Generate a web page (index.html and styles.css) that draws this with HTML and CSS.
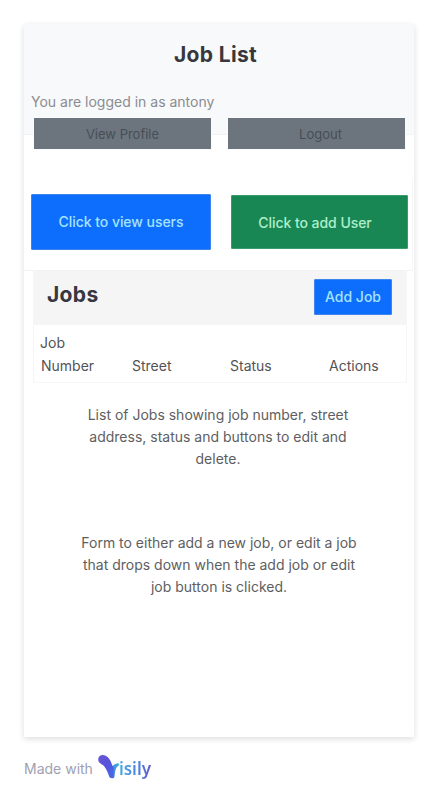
FILE: index.html
```html
<!DOCTYPE html>
<html lang="en">
<head>
<meta charset="utf-8">
<title>Job List</title>
<link rel="stylesheet" href="styles.css">
</head>
<body>
<main class="card">
  <header class="top">
    <h1 class="title">Job List</h1>
    <p class="login">You are logged in as antony</p>
  </header>
  <nav class="account">
    <button class="grey"><span class="profile">View Profile</span></button>
    <button class="grey"><span class="logout">Logout</span></button>
  </nav>
  <section class="users">
    <button class="btn view"><span>Click to view users</span></button>
    <button class="btn add"><span>Click to add User</span></button>
  </section>
  <section class="jobs">
    <div class="jobs-head">
      <h2 class="jobs-title">Jobs</h2>
      <button class="btn add-job"><span>Add Job</span></button>
    </div>
    <div class="columns">
      <span>Job<br><span class="number">Number</span></span>
      <span>Street</span>
      <span>Status</span>
      <span>Actions</span>
    </div>
  </section>
  <p class="note list-note">List of Jobs showing job number, street<br>address, status and buttons to edit and<br>delete.</p>
  <p class="note form-note">Form to either add a new job, or edit a job<br>that drops down when the add job or edit<br>job button is clicked.</p>
</main>
<footer class="made">
  <span class="made-text">Made with</span>
  <span class="brand">
    <svg class="mark" width="23" height="24" viewBox="0 0 23 24">
      <defs>
        <linearGradient id="stem" x1="0" y1="0" x2="0.7" y2="1"><stop offset="0" stop-color="#6a55d0"/><stop offset=".55" stop-color="#5753dd"/><stop offset="1" stop-color="#4567e4"/></linearGradient>
        <linearGradient id="arm" x1="1" y1="0" x2="0" y2="1"><stop offset="0" stop-color="#43b5dc"/><stop offset="1" stop-color="#4568e4"/></linearGradient>
      </defs>
      <path fill="url(#arm)" d="M12 19C13 13.500 14.500 9 19.500 8.200c2-.1 2.300 2.100.7 2.900-2.600 1.500-3 5.400-3.600 9.600-.5 4-4.300 3.500-4.600-1.700Z"/>
      <path fill="url(#stem)" d="M.2 4.200C.2 1.700 2.300 0 4.800.1c3.500.1 6 2.400 7.600 5.600 1 2.100 1.700 4.700 3.300 6.700-.3 3-.1 7-.6 9.700-.7 1.600-3 1.600-3.700 0-1.100-2.900-2.300-7.300-5-10.600C4.700 9.200.2 8.600.2 4.200Z"/>
    </svg>
    <span class="wordmark">isily</span>
  </span>
</footer>
</body>
</html>
```
FILE: styles.css
```css
* { box-sizing: border-box; }
body {
  margin: 0;
  padding: 24px 24px 0;
  background: #fff;
  font-family: Inter, sans-serif;
  font-size: 14px;
  line-height: 22px;
}
h1, h2, p { margin: 0; }
button { border: 0; padding: 0; font: inherit; }
.card {
  height: 713px;
  background: #fff;
  box-shadow: 0 2px 6px rgba(23, 26, 31, .15);
}
.top {
  height: 111px;
  background: #f8f9fb;
  border-bottom: 1px solid #f1f2f4;
}
.title {
  padding-top: 15px;
  text-align: center;
  font-size: 21px;
  line-height: 32px;
  font-weight: 700;
  letter-spacing: .35px;
  color: #37373c;
  text-indent: -7px;
}
.login { padding: 20px 0 0 7px; color: #8b8c90; }
.account {
  position: relative;
  display: flex;
  gap: 17px;
  margin-top: -17px;
  padding-left: 10px;
}
.grey {
  width: 177px;
  height: 31px;
  background: #6c757d;
  box-shadow: 0 0 0 1px #fafbfc;
  color: #474e56;
  font-size: 13px;
}
.logout { position: relative; left: 4px; }
.users {
  display: flex;
  align-items: center;
  gap: 20px;
  width: 389px;
  height: 92px;
  margin-top: 30px;
  padding: 0 0 6px 7px;
  border-right: 1px solid #f6f6f8;
  border-bottom: 1px solid #f3f3f5;
}
.btn { font-weight: 500; border-radius: 1px; }
.view {
  width: 180px;
  height: 56px;
  background: #0d6efd;
  border: 1px solid #3c85ec;
  color: #a5e3fc;
  letter-spacing: -.05px;
}
.add {
  width: 177px;
  height: 54px;
  background: #198754;
  border: 1px solid #399a6b;
  color: #aeefca;
  padding: 2px 9px 0 0;
  letter-spacing: -.05px;
}
.jobs {
  width: 374px;
  height: 112px;
  margin-left: 9px;
  border: 1px solid #f6f6f8;
  border-top: 0;
}
.jobs-head {
  display: flex;
  justify-content: space-between;
  height: 54px;
  padding: 8px 14px 0 13px;
  background: #f5f5f6;
}
.jobs-title {
  font-size: 21px;
  line-height: 32px;
  font-weight: 700;
  letter-spacing: .35px;
  color: #37373f;
}
.add-job {
  width: 78px;
  height: 36px;
  background: #0d6efd;
  border: 1px solid #3c85ec;
  color: #a5e3fc;
}
.columns {
  display: grid;
  grid-template-columns: 92px 98px 99px 1fr;
  align-items: end;
  padding: 6px 0 0 6px;
  line-height: 23px;
  color: #535357;
}
.number { margin-left: 1px; }
.note { text-align: center; color: #5e5e62; }
.list-note { margin-top: 21px; padding-right: 2px; }
.form-note { margin-top: 62px; }
.made {
  display: flex;
  align-items: center;
  height: 30px;
  margin-top: 15px;
  gap: 5px;
}
.made-text { color: #a09fb2; padding-top: 4px; }
.brand { display: flex; }
.mark { margin-top: 1px; }
.wordmark {
  margin: 4px 0 0 -2px;
  font-family: "Noto Sans", sans-serif;
  font-weight: 600;
  font-size: 17px;
  line-height: 22px;
  background: linear-gradient(90deg, #45aadf, #4c82df 60%, #6558cf);
  background-clip: text;
  -webkit-background-clip: text;
  color: transparent;
}
```
